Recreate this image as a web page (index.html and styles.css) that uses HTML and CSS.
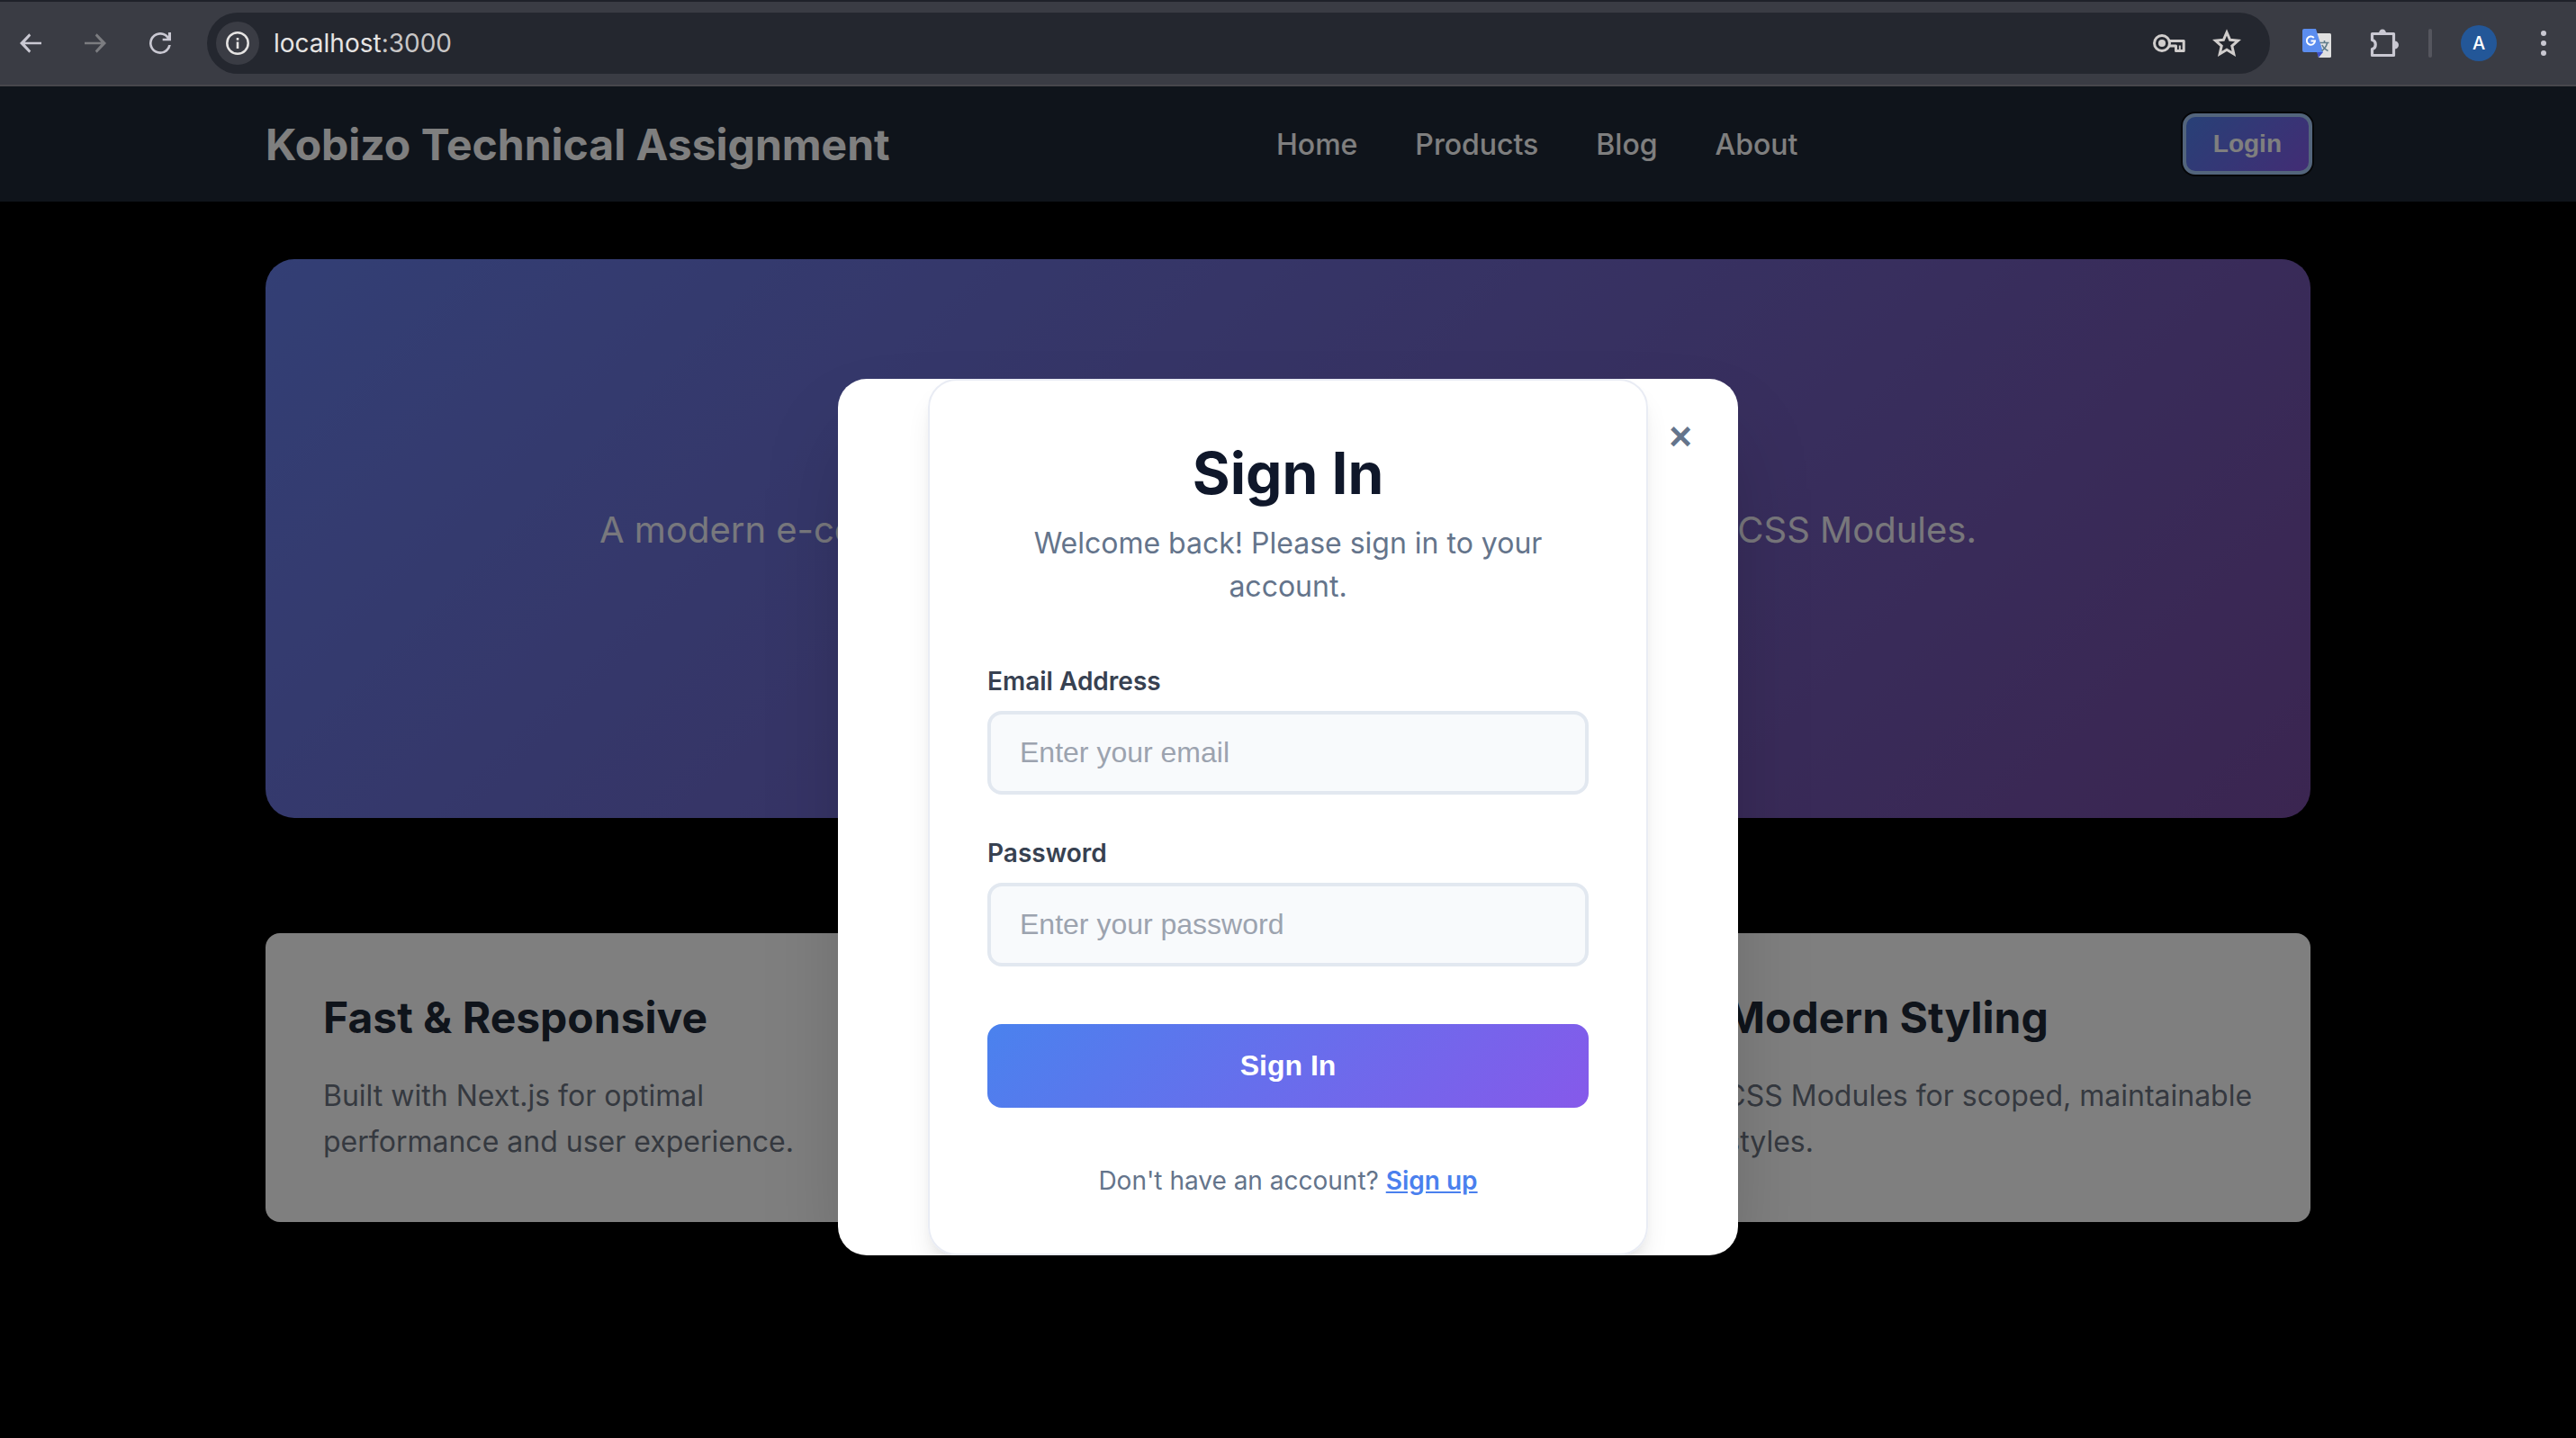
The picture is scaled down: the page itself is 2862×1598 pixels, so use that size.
FILE: index.html
```html
<!DOCTYPE html>
<html lang="en">
<head>
<meta charset="utf-8">
<title>Kobizo Technical Assignment</title>
<link rel="stylesheet" href="styles.css">
</head>
<body>
<div class="toolbar">
  <div class="toolbar-nav">
    <button class="tool" aria-label="Back"><svg width="32" height="32" viewBox="0 0 24 24"><path d="M21 11v2H7.300l4.900 5.300L10.800 20 3 12l7.800-8 1.400 1.700L7.300 11z"/></svg></button>
    <button class="tool tool-off" aria-label="Forward" disabled><svg width="32" height="32" viewBox="0 0 24 24"><path d="M3 11v2h13.700l-4.900 5.300 1.400 1.700L21 12l-7.800-8-1.400 1.700L16.700 11z"/></svg></button>
    <button class="tool" aria-label="Reload"><svg width="32" height="32" viewBox="0 0 24 24"><path d="M12 21a9 9 0 1 1 6.700-15V3H21v7h-7V8h3.700a7 7 0 1 0 1.100 5.500h2.100A9 9 0 0 1 12 21z"/></svg></button>
  </div>
  <div class="omnibox">
    <button class="site-info" aria-label="Site information"><svg width="28" height="28" viewBox="0 0 28 28"><circle cx="14" cy="14" r="11.700" fill="none" stroke="currentColor" stroke-width="2.500"/><path d="M12.700 12.500h2.600v7.500h-2.600zM12.700 8h2.600v2.700h-2.600z"/></svg></button>
    <p class="address">localhost<span class="port">:3000</span></p>
    <button class="tool" aria-label="Passwords"><svg width="36" height="24" viewBox="0 0 36 24"><circle cx="10" cy="12" r="8.500" fill="none" stroke="currentColor" stroke-width="3"/><circle cx="10" cy="12" r="4"/><path d="M18 9.500h16.200v11H25.500v-5.500h-7.500" fill="none" stroke="currentColor" stroke-width="3" stroke-linejoin="round"/><path d="M28.800 14.500h2v6h-2z"/></svg></button>
    <button class="tool" aria-label="Bookmark"><svg width="32" height="32" viewBox="0 0 32 32"><path d="M16 4l3.600 8.300 9 .8-6.800 6 2 8.900-7.800-4.700L8.200 28l2-8.900-6.800-6 9-.8z" fill="none" stroke="currentColor" stroke-width="3"/></svg></button>
  </div>
  <div class="toolbar-extras">
    <button class="tool translate" aria-label="Translate"><svg width="32" height="32" viewBox="0 0 32 32"><path d="M12 5h18.500q1.500 0 1.500 1.500v24q0 1.500-1.500 1.500H18z" fill="#e0e0e0"/><path d="M16 26h7l-5 6z" fill="#3f51c8"/><path d="M2 0h13l8 26H2q-2 0-2-2V2q0-2 2-2z" fill="#5b8def"/><path d="M12.800 10A4.600 4.600 0 1 0 14 13.500H9.500" fill="none" stroke="#fff" stroke-width="2"/><path d="M19.500 15.500h10M24.500 13v2.500M27.500 16c-1 4-3 6.500-6 8.500M22 18c1 2.500 3.500 5 6.500 6.500" fill="none" stroke="#607d8b" stroke-width="1.600"/></svg></button>
    <button class="tool" aria-label="Extensions"><svg width="34" height="34" viewBox="0 0 34 34"><path d="M3.500 6.500h24v24h-24v-7c5-1 5-9 0-10z" fill="none" stroke="currentColor" stroke-width="3.200" stroke-linejoin="round"/><path d="M11 6a4 4.500 0 0 1 8 0zM28.500 14.500a4.500 4.500 0 0 1 0 9z"/></svg></button>
    <span class="separator"></span>
    <button class="avatar" aria-label="Profile">A</button>
    <button class="tool menu" aria-label="Menu"><svg width="8" height="32" viewBox="0 0 8 32"><circle cx="4" cy="5" r="3"/><circle cx="4" cy="16" r="3"/><circle cx="4" cy="27" r="3"/></svg></button>
  </div>
</div>
<div class="page">
  <header class="header">
    <div class="container header-row">
      <a class="logo" href="#">Kobizo Technical Assignment</a>
      <nav class="nav"><a href="#">Home</a><a href="#">Products</a><a href="#">Blog</a><a href="#">About</a></nav>
      <button class="login">Login</button>
    </div>
  </header>
  <main class="container main">
    <section class="hero">
      <p>A modern e-commerce platform built with Next.js, TypeScript, and CSS Modules.</p>
    </section>
    <section class="features">
      <article class="feature">
        <h3>Fast &amp; Responsive</h3>
        <p>Built with Next.js for optimal performance and user experience.</p>
      </article>
      <article class="feature feature-last">
        <h3>Modern Styling</h3>
        <p>CSS Modules for scoped, maintainable styles.</p>
      </article>
    </section>
  </main>
  <div class="overlay">
    <div class="modal" role="dialog" aria-labelledby="signin-title">
      <button class="close" aria-label="Close">×</button>
      <div class="card">
        <h1 id="signin-title">Sign In</h1>
        <p class="subtitle">Welcome back! Please sign in to your account.</p>
        <form>
          <div class="field">
            <label for="email">Email Address</label>
            <input id="email" type="email" placeholder="Enter your email">
          </div>
          <div class="field">
            <label for="password">Password</label>
            <input id="password" type="password" placeholder="Enter your password">
          </div>
          <button class="submit" type="button">Sign In</button>
        </form>
        <p class="signup">Don't have an account? <a href="#">Sign up</a></p>
      </div>
    </div>
  </div>
</div>
</body>
</html>
```
FILE: styles.css
```css
* { box-sizing: border-box; margin: 0; padding: 0; }
body {
  min-height: 100vh;
  display: flex;
  flex-direction: column;
  background: #000;
  font-family: Inter, sans-serif;
}
button { border: 0; background: none; font-family: "Liberation Sans", Arial, sans-serif; }
a { color: inherit; text-decoration: none; }
svg { display: block; fill: currentColor; }

/* Browser toolbar */
.toolbar {
  display: flex;
  align-items: center;
  height: 96px;
  padding: 0 32px 0 18px;
  background: #3a3c44;
  border-top: 2px solid #1f222a;
  border-bottom: 2px solid #47474c;
}
.toolbar-nav { display: flex; gap: 40px; margin-right: 36px; }
.tool { color: #c9c8d2; }
.tool-off { color: #7b7c80; }
.omnibox {
  flex: 1;
  display: flex;
  align-items: center;
  gap: 30px;
  height: 68px;
  padding: 0 32px 0 10px;
  border-radius: 34px;
  background: #24272f;
}
.omnibox .tool { color: #d0cdcc; }
.site-info {
  display: grid;
  place-items: center;
  width: 48px;
  height: 48px;
  border-radius: 24px;
  background: #3a3c44;
  color: #e6e4e3;
}
.address { flex: 1; margin-left: -14px; font-size: 28px; color: #e6e4e3; }
.port { color: #c8c6c6; }
.toolbar-extras { display: flex; align-items: center; gap: 32px; margin-left: 36px; }
.translate { margin-right: 10px; }
.menu { margin-left: 16px; }
.separator { width: 4px; height: 32px; border-radius: 2px; background: #55565e; }
.avatar {
  width: 40px;
  height: 40px;
  border-radius: 20px;
  background: #235798;
  color: #fff;
  font: 500 20px Inter, sans-serif;
}

/* Site */
.page { position: relative; flex: 1; }
.container { max-width: 2400px; margin: 0 auto; padding: 0 64px; }
.header { background: #1f2937; color: #fff; }
.header-row { display: flex; align-items: center; justify-content: space-between; height: 128px; }
.logo { font-size: 48px; font-weight: 700; }
.nav { display: flex; gap: 64px; font-size: 32px; font-weight: 500; }
.login {
  padding: 16px 32px;
  border-radius: 12px;
  background: linear-gradient(135deg, #4f82ee, #8659ea);
  color: #fff;
  font-size: 28px;
  font-weight: 700;
  line-height: 32px;
  outline: 4px solid #a6caf8;
  outline-offset: -2px;
  box-shadow: 0 0 0 4px #0a0c10;
}
.main { padding-top: 64px; }
.hero {
  display: grid;
  place-items: center;
  height: 621px;
  padding-bottom: 20px;
  border-radius: 32px;
  background: linear-gradient(135deg, #667eea 0%, #764ba2 100%);
  color: #fff;
  text-align: center;
}
.hero p { font-size: 40px; opacity: .9; }
.features { display: grid; grid-template-columns: repeat(3, 1fr); gap: 64px; margin-top: 128px; }
.feature { padding: 64px; border-radius: 16px; background: #fff; }
.feature-last { grid-column: 3; }
.feature h3 { margin-bottom: 32px; font-size: 48px; line-height: 59px; color: #1f2937; }
.feature p { font-size: 32px; line-height: 51px; color: #6b7280; }

/* Sign-in dialog */
.overlay {
  position: absolute;
  inset: 0;
  display: flex;
  justify-content: center;
  align-items: flex-start;
  padding-top: 325px;
  background: rgba(0, 0, 0, .5);
}
.modal {
  position: relative;
  width: 1000px;
  overflow: hidden;
  border-radius: 32px;
  background: #fff;
  box-shadow: 0 50px 100px -24px rgba(0, 0, 0, .25);
}
.close {
  position: absolute;
  top: 32px;
  right: 32px;
  width: 64px;
  height: 64px;
  color: #64748b;
  font-size: 44px;
  font-weight: 700;
  line-height: 64px;
}
.card {
  max-width: 800px;
  margin: 0 auto;
  padding: 64px;
  border: 2px solid #e9ecf4;
  border-radius: 32px;
  box-shadow: 0 20px 30px -6px rgba(0, 0, 0, .1), 0 8px 12px -4px rgba(0, 0, 0, .05);
}
.card h1 { margin-bottom: 16px; font-size: 64px; line-height: 77px; color: #0f172a; text-align: center; }
.subtitle { margin-bottom: 64px; font-size: 32px; line-height: 48px; color: #64748b; text-align: center; }
.field { margin-bottom: 48px; }
.field label { display: block; margin-bottom: 16px; font-size: 28px; font-weight: 600; line-height: 34px; color: #374151; }
.field input {
  display: block;
  width: 100%;
  height: 93px;
  padding: 0 32px;
  border: 4px solid #e2e8f0;
  border-radius: 16px;
  background: #f8fafc;
  font: 32px "Liberation Sans", Arial, sans-serif;
}
.field input::placeholder { color: #9ca3af; }
.submit {
  display: block;
  width: 100%;
  height: 93px;
  margin: 64px 0;
  border-radius: 16px;
  background: linear-gradient(135deg, #4a82ee, #8659ea);
  color: #fff;
  font-size: 32px;
  font-weight: 700;
}
.signup { font-size: 28px; line-height: 34px; color: #64748b; text-align: center; }
.signup a { color: #4a80ee; font-weight: 600; text-decoration: underline; }
```
